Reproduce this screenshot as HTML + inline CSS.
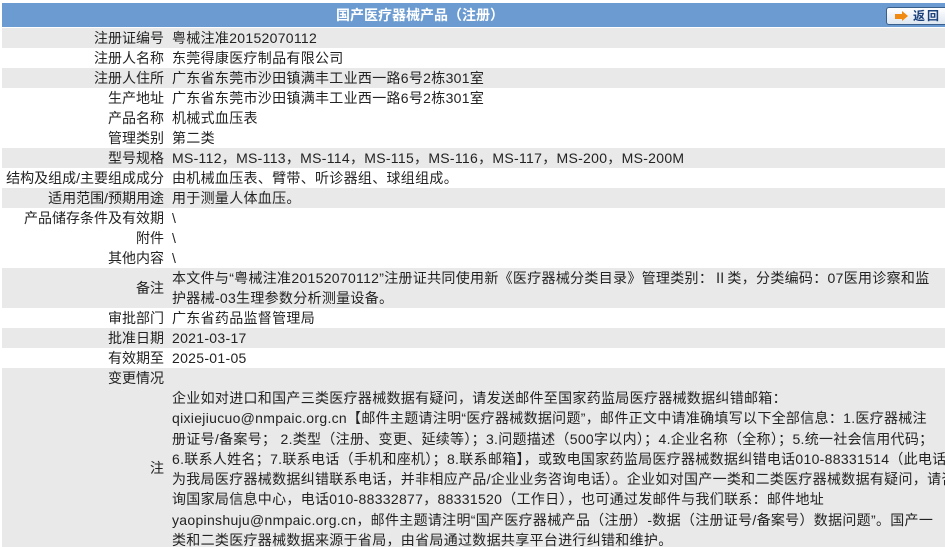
<!DOCTYPE html>
<html><head><meta charset="utf-8">
<style>
html,body{margin:0;padding:0;background:#fff;width:945px;height:547px;overflow:hidden;}
body{font-family:"Liberation Sans","Noto Sans CJK SC",sans-serif;font-size:14px;color:#222;position:relative;}
.hd{position:absolute;left:2px;top:3px;width:943px;height:24px;background:#6b9bd0;}
.hd .t{position:absolute;left:0;width:836px;top:0;line-height:24px;text-align:center;color:#fff;font-weight:bold;font-size:14px;}
.btn{position:absolute;left:884px;top:4px;width:70px;height:16px;border:1px solid #3a5f8a;border-radius:3px;background:linear-gradient(#ffffff,#dde6f0);font-size:12px;font-weight:bold;color:#1a3f7a;line-height:16px;}
.btn .ar{position:absolute;left:8px;top:3px;width:0;height:0;}
.btn .ar:before{content:"";position:absolute;left:0;top:3px;width:7px;height:5px;background:#f08a10;}
.btn .ar:after{content:"";position:absolute;left:7px;top:0;border-left:6px solid #f08a10;border-top:5.5px solid transparent;border-bottom:5.5px solid transparent;}
.btn .tx{position:absolute;left:26px;top:0;letter-spacing:2px;}
.r{position:absolute;left:2px;width:943px;overflow:hidden;}
.g{background:#e9e9e9;}
.l{position:absolute;left:0;width:162px;text-align:right;white-space:nowrap;}
.v{position:absolute;left:170px;white-space:nowrap;line-height:20px;letter-spacing:0.3px;}
.r20 .l,.r20 .v{top:0;line-height:20px;}
.note{position:absolute;left:170px;top:0;line-height:20.3px;white-space:nowrap;letter-spacing:0.3px;}
</style></head><body>
<div class="hd"><div class="t">国产医疗器械产品（注册）</div>
<div class="btn"><span class="ar"></span><span class="tx">返回</span></div></div>

<div class="r r20 g" style="top:28px;height:20px"><span class="l">注册证编号</span><span class="v">粤械注准20152070112</span></div>
<div class="r r20" style="top:48px;height:20px"><span class="l">注册人名称</span><span class="v">东莞得康医疗制品有限公司</span></div>
<div class="r r20 g" style="top:68px;height:20px"><span class="l">注册人住所</span><span class="v">广东省东莞市沙田镇满丰工业西一路6号2栋301室</span></div>
<div class="r r20" style="top:88px;height:20px"><span class="l">生产地址</span><span class="v">广东省东莞市沙田镇满丰工业西一路6号2栋301室</span></div>
<div class="r r20" style="top:108px;height:20px"><span class="l">产品名称</span><span class="v">机械式血压表</span></div>
<div class="r r20" style="top:128px;height:20px"><span class="l">管理类别</span><span class="v">第二类</span></div>
<div class="r r20 g" style="top:148px;height:20px"><span class="l">型号规格</span><span class="v">MS-112，MS-113，MS-114，MS-115，MS-116，MS-117，MS-200，MS-200M</span></div>
<div class="r r20" style="top:168px;height:20px"><span class="l">结构及组成/主要组成成分</span><span class="v">由机械血压表、臂带、听诊器组、球组组成。</span></div>
<div class="r r20 g" style="top:188px;height:20px"><span class="l">适用范围/预期用途</span><span class="v">用于测量人体血压。</span></div>
<div class="r r20" style="top:208px;height:20px"><span class="l">产品储存条件及有效期</span><span class="v">\</span></div>
<div class="r r20" style="top:228px;height:20px"><span class="l">附件</span><span class="v">\</span></div>
<div class="r r20" style="top:248px;height:20px"><span class="l">其他内容</span><span class="v">\</span></div>
<div class="r g" style="top:268px;height:40px"><span class="l" style="top:10px;line-height:20px">备注</span><span class="v" style="top:0">本文件与“粤械注准20152070112”注册证共同使用新《医疗器械分类目录》管理类别：Ⅱ类，分类编码：07医用诊察和监<br>护器械-03生理参数分析测量设备。</span></div>
<div class="r r20" style="top:308px;height:20px"><span class="l">审批部门</span><span class="v">广东省药品监督管理局</span></div>
<div class="r r20 g" style="top:328px;height:20px"><span class="l">批准日期</span><span class="v">2021-03-17</span></div>
<div class="r r20" style="top:348px;height:20px"><span class="l">有效期至</span><span class="v">2025-01-05</span></div>
<div class="r r20 g" style="top:368px;height:20px"><span class="l">变更情况</span></div>
<div class="r g" style="top:388px;height:159px"><span class="l" style="top:70px;line-height:20px">注</span>
<div class="note">企业如对进口和国产三类医疗器械数据有疑问，请发送邮件至国家药监局医疗器械数据纠错邮箱：<br>qixiejiucuo@nmpaic.org.cn【邮件主题请注明“医疗器械数据问题”，邮件正文中请准确填写以下全部信息：1.医疗器械注<br>册证号/备案号； 2.类型（注册、变更、延续等）；3.问题描述（500字以内）；4.企业名称（全称）；5.统一社会信用代码；<br>6.联系人姓名；7.联系电话（手机和座机）；8.联系邮箱】，或致电国家药监局医疗器械数据纠错电话010-88331514（此电话<br>为我局医疗器械数据纠错联系电话，并非相应产品/企业业务咨询电话）。企业如对国产一类和二类医疗器械数据有疑问，请咨<br>询国家局信息中心，电话010-88332877，88331520（工作日），也可通过发邮件与我们联系：邮件地址<br>yaopinshuju@nmpaic.org.cn，邮件主题请注明“国产医疗器械产品（注册）-数据（注册证号/备案号）数据问题”。国产一<br>类和二类医疗器械数据来源于省局，由省局通过数据共享平台进行纠错和维护。</div></div>
</body></html>
